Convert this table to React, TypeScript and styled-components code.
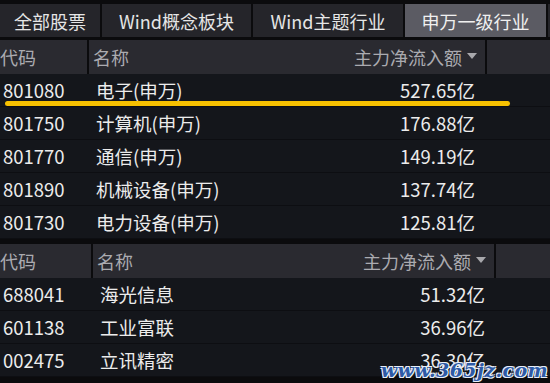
import React from "react";
import styled, { createGlobalStyle } from "styled-components";

const GlobalStyle = createGlobalStyle`
  html, body {
    margin: 0;
    padding: 0;
    background: #0b0b0d;
    overflow: hidden;
  }
  body {
    font-family: "Noto Sans CJK SC", "Noto Sans", sans-serif;
  }
`;

const tabs = [
  { label: "全部股票", width: 100 },
  { label: "Wind概念板块", width: 149 },
  { label: "Wind主题行业", width: 150 },
  { label: "申万一级行业", width: 141, active: true },
];

const industries = [
  { code: "801080", name: "电子(申万)", value: "527.65亿", mark: true },
  { code: "801750", name: "计算机(申万)", value: "176.88亿" },
  { code: "801770", name: "通信(申万)", value: "149.19亿" },
  { code: "801890", name: "机械设备(申万)", value: "137.74亿" },
  { code: "801730", name: "电力设备(申万)", value: "125.81亿" },
];

const stocks = [
  { code: "688041", name: "海光信息", value: "51.32亿" },
  { code: "601138", name: "工业富联", value: "36.96亿" },
  { code: "002475", name: "立讯精密", value: "36.30亿" },
];

export default function App() {
  return (
    <Screen>
      <GlobalStyle />
      <TabBar>
        {tabs.map((t) => (
          <Tab key={t.label} $active={!!t.active} $w={t.width}>
            {t.label}
          </Tab>
        ))}
        <TabRest />
      </TabBar>

      <Table>
        <HeaderRow $codeW={87} $mainW={396}>
          <HeadCell>代码</HeadCell>
          <HeadCell $split $pl={4} $pr={8}>
            <span>名称</span>
            <SortLabel>
              主力净流入额<Caret />
            </SortLabel>
          </HeadCell>
          <HeadCell />
        </HeaderRow>
        {industries.map((r) => (
          <DataRow key={r.code} $nameX={96} $valueR={475}>
            <Code>{r.code}</Code>
            <Name>{r.name}</Name>
            <Value>{r.value}</Value>
            {r.mark && <Highlight />}
          </DataRow>
        ))}
      </Table>

      <Table $gap={5}>
        <HeaderRow $codeW={91} $mainW={401}>
          <HeadCell>代码</HeadCell>
          <HeadCell $split $pl={4} $pr={8}>
            <span>名称</span>
            <SortLabel>
              主力净流入额<Caret />
            </SortLabel>
          </HeadCell>
          <HeadCell />
        </HeaderRow>
        {stocks.map((r) => (
          <DataRow key={r.code} $nameX={100} $valueR={485}>
            <Code>{r.code}</Code>
            <Name>{r.name}</Name>
            <Value>{r.value}</Value>
          </DataRow>
        ))}
      </Table>

      <Watermark>www.365jz.com</Watermark>
    </Screen>
  );
}

const Screen = styled.div`
  position: relative;
  width: 550px;
  height: 383px;
  overflow: hidden;
  background: #0b0b0d;
  padding-top: 4px;
  box-sizing: border-box;
`;

const TabBar = styled.div`
  display: flex;
  gap: 2px;
  height: 33px;
`;

const Tab = styled.div<{ $active: boolean; $w: number }>`
  flex: 0 0 ${(p) => p.$w}px;
  display: flex;
  align-items: center;
  justify-content: center;
  background: ${(p) => (p.$active ? "#5b5b63" : "#25252a")};
  color: ${(p) => (p.$active ? "#f0f0f0" : "#e6e6e6")};
  font-size: 18px;
  line-height: 1;
`;

const TabRest = styled.div`
  flex: 1;
  background: #25252a;
`;

const Table = styled.div<{ $gap?: number }>`
  margin-top: ${(p) => p.$gap ?? 3}px;
  display: flex;
  flex-direction: column;
`;

const HeaderRow = styled.div<{ $codeW: number; $mainW: number }>`
  display: grid;
  grid-template-columns: ${(p) => p.$codeW}px ${(p) => p.$mainW}px 1fr;
  column-gap: 2px;
  height: 34px;
`;

const HeadCell = styled.div<{ $split?: boolean; $pl?: number; $pr?: number }>`
  display: flex;
  align-items: center;
  justify-content: ${(p) => (p.$split ? "space-between" : "flex-start")};
  padding-left: ${(p) => p.$pl ?? 0}px;
  padding-right: ${(p) => p.$pr ?? 0}px;
  background: #2a2a30;
  color: #ababb0;
  font-size: 18px;
  line-height: 1;
`;

const SortLabel = styled.span`
  display: flex;
  align-items: center;
  gap: 5px;
`;

const Caret = styled.span`
  width: 0;
  height: 0;
  border-left: 5px solid transparent;
  border-right: 5px solid transparent;
  border-top: 6px solid #a8a8ac;
  margin-bottom: 2px;
`;

const DataRow = styled.div<{ $nameX: number; $valueR: number }>`
  position: relative;
  box-sizing: border-box;
  display: grid;
  grid-template-columns: ${(p) => p.$nameX}px ${(p) => p.$valueR - p.$nameX - 120}px 120px;
  align-items: center;
  height: 33px;
  background: #14161b;
  border-bottom: 1px solid #0d0e12;
  color: #ececec;
  font-size: 18.5px;
  line-height: 1;
`;

const Code = styled.span`
  padding-left: 3px;
`;

const Name = styled.span`
  white-space: nowrap;
`;

const Value = styled.span`
  text-align: right;
`;

const Highlight = styled.div`
  position: absolute;
  left: 5px;
  width: 505px;
  bottom: 0px;
  height: 5px;
  border-radius: 3px;
  background: #f7c100;
`;

const Watermark = styled.div`
  position: absolute;
  right: 2px;
  bottom: 2px;
  font-family: "DejaVu Serif", serif;
  font-style: italic;
  font-weight: bold;
  font-size: 19px;
  letter-spacing: 0.4px;
  color: #2d5aa6;
  text-shadow: 1px 1px 0 #e8eef8, -1px -1px 0 #e8eef8, 1px -1px 0 #e8eef8,
    -1px 1px 0 #e8eef8;
`;
